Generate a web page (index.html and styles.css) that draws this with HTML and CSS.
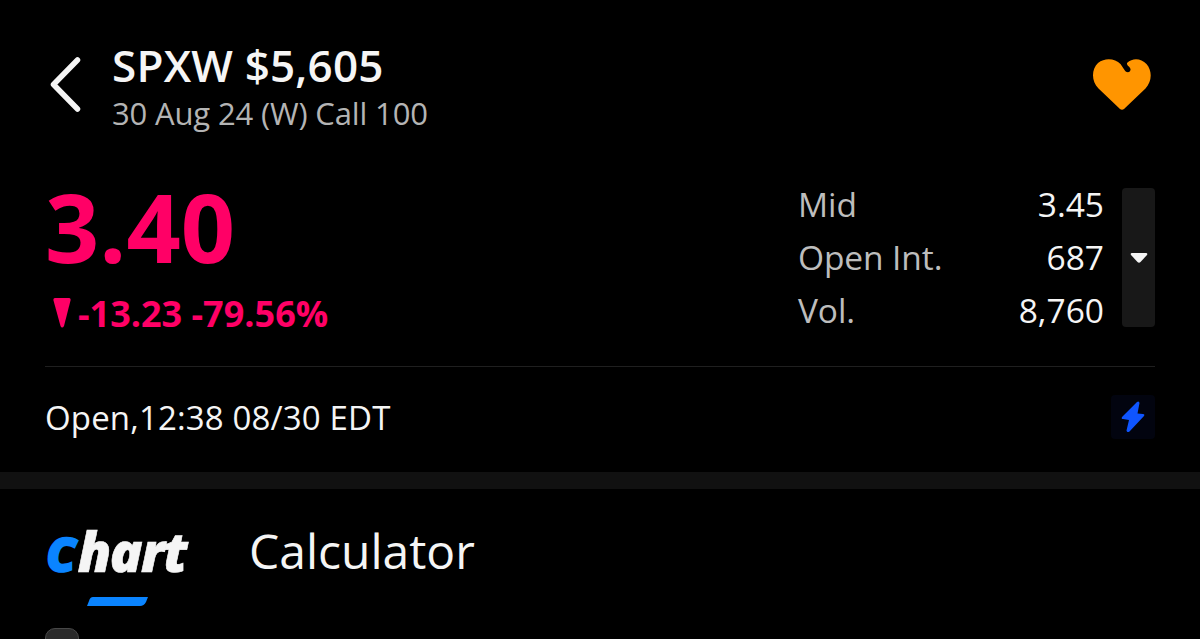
FILE: index.html
```
<!DOCTYPE html>
<html lang="en">
<head>
    <meta charset="utf-8">
    <title>SPXW $5,605</title>
    <link rel="stylesheet" href="styles.css">
</head>
<body>
    <!-- Contract name -->
    <header class="header">
        <svg class="back" width="34" height="58" viewBox="0 0 34 58">
            <path d="M29.500 4 L5.500 28.500 L29.500 53"/>
        </svg>
        <div class="contract">
            <h1 class="title"><span>SPXW $5,605</span></h1>
            <div class="subtitle"><span>30 Aug 24 (W) Call 100</span></div>
        </div>
        <svg class="heart" width="60" height="54" viewBox="0 0 60 54">
            <path d="M28 51 L6.500 30.500 C-1 23 -0.500 11 6 5 C13 -0.500 23 0.500 28.500 6 L32.500 12 C34.500 15.500 39 14.500 38.500 11 C38 8.500 34.500 8 35 5 C41 -0.500 49 0.500 54.500 6 C60.500 13 60 23.500 53.500 30.500 L32 51 Q30 52.500 28 51 Z"/>
        </svg>
    </header>

    <!-- Last price and stats -->
    <section class="quote">
        <div class="price">
            <div class="last"><span>3.40</span></div>
            <div class="change">
                <svg class="down" width="20" height="32" viewBox="0 0 20 32">
                    <path d="M3 1 H17 Q19 1 18.500 3.500 L12 29 Q10 32 8.500 29 L1.500 3.500 Q1 1 3 1 Z"/>
                </svg>
                <span>-13.23 -79.56%</span>
            </div>
        </div>
        <div class="stats">
            <div class="row"><span class="label">Mid</span><span>3.45</span></div>
            <div class="row"><span class="label">Open Int.</span><span>687</span></div>
            <div class="row"><span class="label">Vol.</span><span>8,760</span></div>
        </div>
        <button class="expand">
            <svg width="18" height="12" viewBox="0 0 18 12">
                <path d="M2 1 H16 Q18 1 17 3 L10.500 10 Q9 11.500 7.500 10 L1 3 Q0 1 2 1 Z"/>
            </svg>
        </button>
    </section>

    <!-- Market status -->
    <section class="status">
        <span>Open,12:38 08/30 EDT</span>
        <div class="flash">
            <svg width="26" height="34" viewBox="0 0 26 34">
                <path d="M17 2 L2 17 Q1 19 3 19 L9 20 L6.500 30.500 Q7 33 9.500 31.500 L24 16 Q25 14 23 14 L17.500 13.500 L19.500 3 Q19 0.500 17 2 Z"/>
            </svg>
        </div>
    </section>

    <!-- Tabs -->
    <nav class="tabs">
        <div class="tab active"><span class="initial">C</span><span class="rest">hart</span></div>
        <div class="tab"><span>Calculator</span></div>
    </nav>
    <svg class="underline" width="62" height="9" viewBox="0 0 62 9">
        <path d="M6 0 H61 L59 5 Q57 9 53 9 H0 L2 4 Q3 0 6 0 Z"/>
    </svg>
    <div class="chip"></div>
</body>
</html>
```

FILE: styles.css
```
body {
    margin: 0;
    height: 639px;
    overflow: hidden;
    background: #000;
    color: #f5f5f5;
    font-family: "Open Sans", "Noto Sans", sans-serif;
}

svg {
    display: block;
}

.header {
    display: flex;
    height: 133px;
    padding: 0 48px 0 48px;
}

.back {
    margin-top: 56px;
    fill: none;
    stroke: #f5f5f5;
    stroke-width: 5.5;
    stroke-linecap: round;
    stroke-linejoin: round;
}

.contract {
    flex: 1;
    margin: 39px 0 0 30px;
}

.title {
    margin: 0;
    font-size: 44px;
    font-weight: 600;
    line-height: 52px;
    letter-spacing: 0.2px;
}

.subtitle {
    color: #b4b4b4;
    font-size: 31px;
    line-height: 44px;
    letter-spacing: -0.15px;
}

.heart {
    margin-top: 58px;
    fill: #ff9500;
}

/* Price on the left, stats on the right */
.quote {
    display: flex;
    height: 188px;
    margin: 0 45px;
    padding-top: 45px;
    border-bottom: 1px solid #1f1f1f;
}

.price {
    flex: 1;
    color: #ff0066;
    font-weight: 700;
}

.last {
    font-size: 95px;
    line-height: 96px;
}

.change {
    display: flex;
    margin-top: 14px;
    font-size: 36px;
    line-height: 52px;
}

.down {
    margin: 9px 6px 0 7px;
    fill: #ff0066;
}

.stats {
    width: 306px;
    margin: 0 18px 0 0;
    font-size: 33.5px;
    line-height: 53px;
}

.row {
    display: flex;
    justify-content: space-between;
}

.label {
    color: #bdbdbd;
    letter-spacing: -0.1px;
}

.expand {
    display: flex;
    align-items: center;
    justify-content: center;
    width: 33px;
    height: 139px;
    margin-top: 10px;
    padding: 0;
    border: none;
    border-radius: 4px;
    background: #181818;
    fill: #f5f5f5;
}

.status {
    display: flex;
    align-items: center;
    justify-content: space-between;
    height: 100px;
    padding: 0 45px 5px;
    border-bottom: 17px solid #111;
    font-size: 33px;
    letter-spacing: 0.15px;
}

.flash {
    display: flex;
    align-items: center;
    justify-content: center;
    width: 44px;
    height: 44px;
    border-radius: 4px;
    background: #02040f;
    fill: #0f55ff;
}

.tabs {
    display: flex;
    height: 108px;
    padding-left: 46px;
    font-size: 48px;
    line-height: 124px;
}

.tab.active {
    width: 203px;
    font-size: 54px;
    font-style: italic;
    font-weight: 800;
    letter-spacing: -1.5px;
}

.initial {
    color: #0a84ff;
    font-size: 48px;
    letter-spacing: 1.5px;
    -webkit-text-stroke: 1.5px #0a84ff;
}

.rest {
    -webkit-text-stroke: 0.6px #f5f5f5;
}

.underline {
    margin-left: 87px;
    fill: #0a84ff;
}

.chip {
    width: 32px;
    height: 32px;
    margin: 22px 0 0 45px;
    border: 1px solid #484848;
    border-radius: 10px;
    background: #2a2a2a;
}
```
